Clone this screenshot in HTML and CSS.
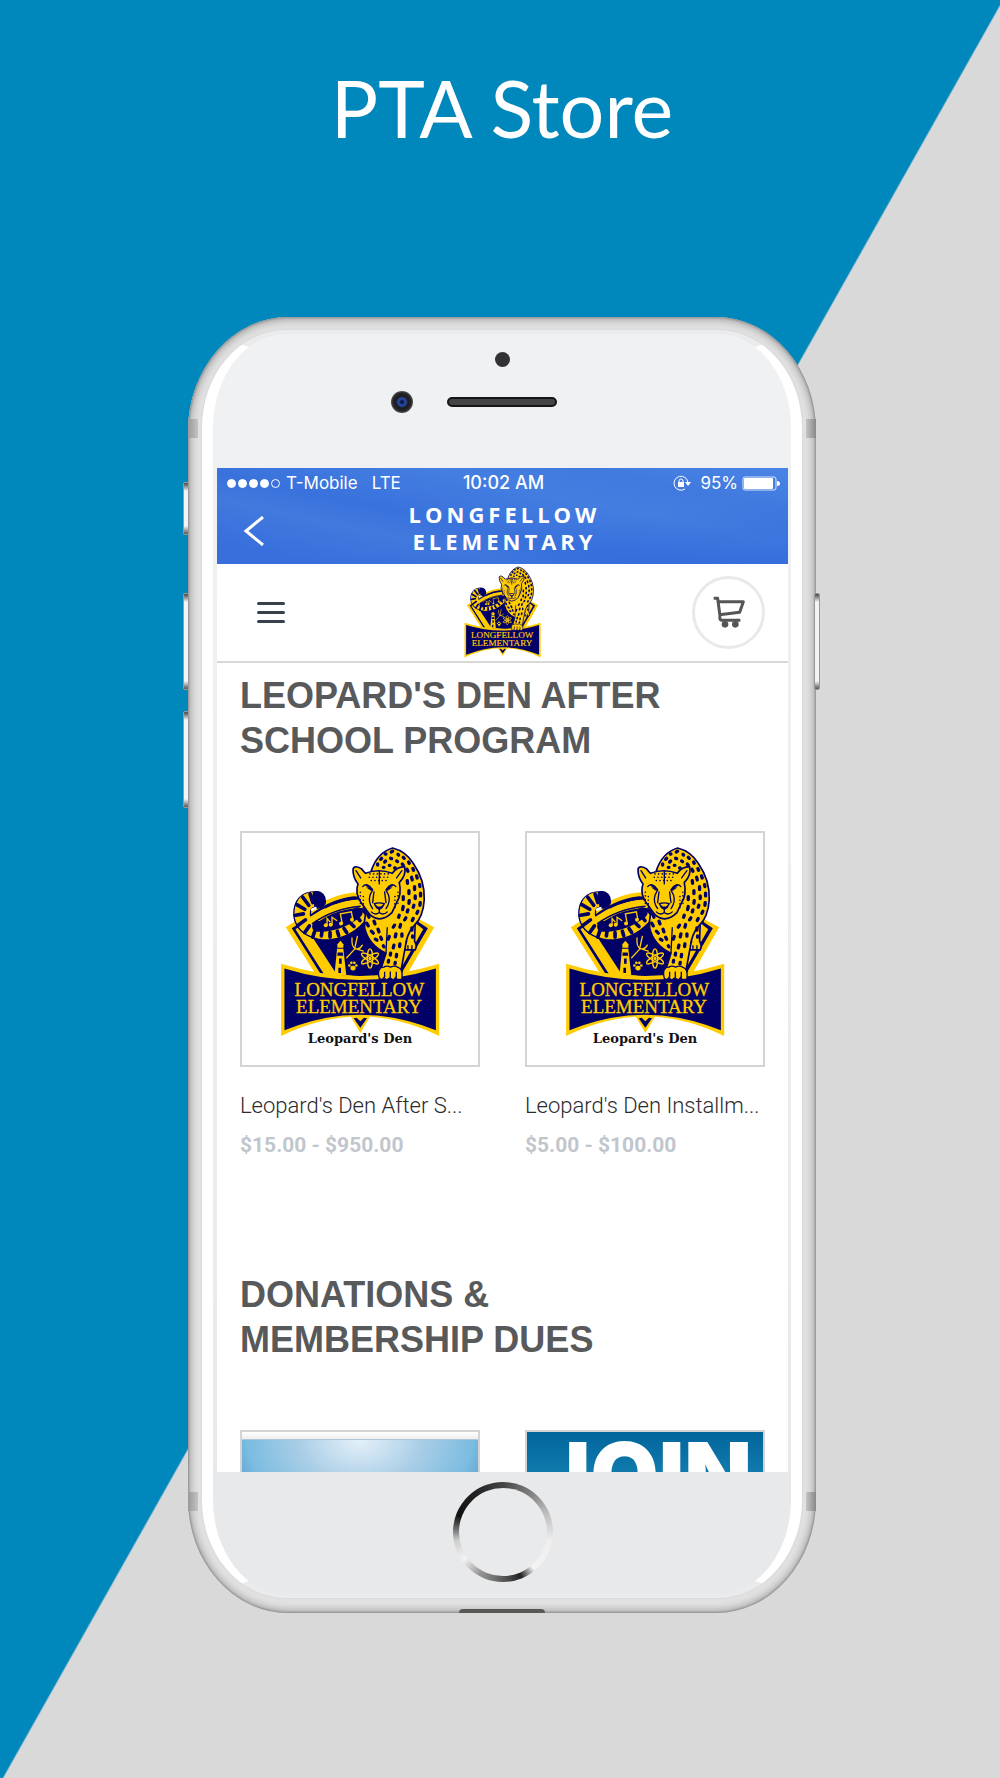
FILE: index.html
```html
<!DOCTYPE html>
<html lang="en">
<head>
    <meta charset="UTF-8">
    <meta name="viewport" content="width=device-width, initial-scale=1.0">
    <title>PTA Store</title>
    <link rel="stylesheet" href="styles.css">
</head>
<body>

<!-- school logo, used in the header and in the products -->
<svg class="sprite" aria-hidden="true">
    <symbol id="logo" viewBox="150 76 480 574">
        <!-- shield -->
        <path fill="#fc0" d="M167 320L205 296Q285 224 370 216Q480 220 575 300L613 320L515 490H275Z"/>
        <path fill="#006" d="M185 323L212 306Q290 235 372 227Q480 232 568 306L594 323L502 480H284Z"/>
        <path fill="#fc0" d="M196 326L218 312Q295 246 375 238Q480 244 562 312L580 326L492 480H294Z"/>
        <path fill="#006" d="M234 330Q300 264 392 262Q490 266 546 326L470 464Q400 474 350 464L332 480Z"/>
        <path stroke="#006" stroke-width="6" d="M268 370L312 436M546 325L524 365"/>

        <!-- lighthouse -->
        <path fill="#fc0" d="M321 385H340L349 466H313Z"/>
        <path fill="#fc0" d="M322 382V371L331 361L340 371V382Z"/>
        <path fill="#006" d="M323 396H338L340 406H322ZM327 414H335V430H327ZM325 442H333V458H325Z"/>
        <!-- music notes, trident, atom and paw -->
        <g fill="none" stroke="#fc0" stroke-width="4" stroke-linecap="round">
            <path d="M350 412L374 386M366 352Q364 380 376 384Q388 390 397 374M382 348L374 384M374 384L400 392"/>
            <ellipse cx="420" cy="414" rx="8" ry="29"/>
            <ellipse cx="420" cy="414" rx="8" ry="29" transform="rotate(60 420 414)"/>
            <ellipse cx="420" cy="414" rx="8" ry="29" transform="rotate(120 420 414)"/>
        </g>
        <g fill="#fc0">
            <circle cx="420" cy="414" r="5"/>
            <ellipse cx="369" cy="443" rx="8" ry="7"/>
            <circle cx="358" cy="435" r="4"/>
            <circle cx="364" cy="427" r="4"/>
            <circle cx="373" cy="427" r="4"/>
            <circle cx="379" cy="435" r="4"/>
        </g>

        <!-- tail -->
        <g fill="none" stroke-linecap="round">
            <path stroke="#006" stroke-width="54" d="M260 238Q214 236 216 284Q222 326 290 336"/>
            <path stroke="#fc0" stroke-width="46" stroke-linecap="butt" d="M250 236Q215 240 216 284Q222 326 290 336"/>
            <path stroke="#006" stroke-width="46" d="M286 338Q344 338 388 290"/>
            <path stroke="#fc0" stroke-width="39" d="M280 337Q344 337 386 291"/>
            <path stroke="#006" stroke-width="32" d="M262 318Q330 318 382 276"/>
            <path stroke="#006" stroke-width="11" d="M240 220L248 246M218 230L236 254M200 252L224 266M196 284L220 280M204 314L226 298M224 336L238 316M248 350L254 332M274 346L276 330M300 350L300 336M326 346L322 332M350 336L342 324M372 318L362 308M390 300L382 290"/>
            <path stroke="#006" stroke-width="32" d="M262 228L272 244"/>
            <path stroke="#fff" stroke-width="8" d="M246 267L256 263"/>
            <path stroke="#fc0" stroke-width="20" stroke-linecap="butt" d="M244 298Q310 252 384 246"/>
            <path stroke="#006" stroke-width="5" stroke-linecap="butt" d="M246 310Q310 264 392 257M284 262Q330 236 382 234"/>
            <path stroke="#fc0" stroke-width="4" d="M291 314V294L300 304M306 312V290L320 300M336 306L331 280L364 274L368 294"/>
        </g>
        <g fill="#fc0">
            <circle cx="287" cy="314" r="6"/>
            <circle cx="302" cy="313" r="6"/>
            <circle cx="333" cy="309" r="6"/>
            <circle cx="366" cy="298" r="6"/>
        </g>

        <!-- hind leg and body -->
        <path fill="#fc0" stroke="#006" stroke-width="5" d="M518 320L530 364Q520 376 526 388L556 388Q562 376 554 362L556 300Z"/>
        <path fill="#fc0" stroke="#006" stroke-width="5" d="M424 150Q442 96 488 82Q528 92 550 128Q586 180 583 238Q580 290 552 316Q530 340 526 380L514 446Q524 470 512 477H452Q440 462 454 442L468 398Q416 374 404 322Q400 280 420 260L500 200Z"/>
        <path fill="none" stroke="#006" stroke-width="10" stroke-linecap="round" d="M443 130v3M452 116l3-3M466 100h2M484 94l4-2M504 101l2 2M520 110l3 3M536 124l2 4M549 144l2 5M560 166l2 6M569 192l1 6M572 218v8M571 246l-1 8M564 272l-3 6M550 294l-3 6M464 124l3-3M482 113l3 1M500 121l3 2M517 130l3 4M531 146l3 6M545 170l2 8M554 198v9M556 226v8M552 254l-2 6M460 140h2M478 134h2M494 142h2M532 180l1 8M537 210v9M538 240l-1 8M534 268l-2 6M520 228v9M520 258l-2 9M528 292l-4 6M508 284l-2 6M512 312l-2 8M494 314l-4 6M498 340l-2 9M516 340v7M478 348l-3 8M492 374l-2 8M510 370l-1 8M482 398l-1 6M500 402l-1 7M414 282l3 8M410 308l5 8M432 302l3 8M424 332l6 6M444 326l3 8M452 350l3 6M436 356l5 3M460 376l2 3M476 420l-1 5M496 426l-1 4M546 322v7M548 346v4"/>
        <path fill="none" stroke="#006" stroke-width="4" d="M472 320L468 398M534 388V374M546 388V374"/>

        <!-- head -->
        <path fill="#fc0" stroke="#006" stroke-width="5" stroke-linejoin="round" d="M369 146Q372 132 394 144L406 158Q447 143 487 158Q502 138 524 138Q530 164 508 186Q516 222 500 246L486 276Q468 294 448 295Q424 292 412 272L392 244Q374 216 384 190Q368 170 369 146Z"/>
        <path fill="none" stroke="#006" stroke-width="4" stroke-linecap="round" d="M378 150L392 172M516 150L500 172M448 150V190M408 194L427 207M488 194L469 207M398 198Q412 182 428 208L420 224Q414 246 428 264M498 198Q484 182 468 208L476 224Q482 246 468 264M432 214L428 246M464 214L468 246M448 266V276M448 276Q436 286 424 274M448 276Q460 286 472 274"/>
        <path fill="#006" d="M430 248Q448 242 466 248L458 262L448 269L438 262ZM408 200L428 204L424 211ZM488 200L468 204L472 211Z"/>
        <path fill="#fc0" d="M436 251Q448 247 460 251L453 258H443Z"/>
        <path fill="none" stroke="#006" stroke-width="5" stroke-linecap="round" stroke-dasharray="0 11" d="M420 160H480M418 170H480M424 180H474M391 215V250M400 228V262M504 215V250M495 228V262"/>

        <!-- banner -->
        <path fill="#fc0" d="M357 580H425L391 638Z"/>
        <path fill="#006" d="M371 594L380 592L391 603L402 592L411 594L391 622Z"/>
        <path fill="#fc0" d="M153 430Q390 504 628 430V647Q390 530 153 647Z"/>
        <path fill="#006" d="M163 444Q390 514 618 444V630Q390 536 163 630Z"/>
        <path fill="#fc0" stroke="#006" stroke-width="4" d="M448 474Q440 440 462 440Q470 434 482 440Q496 434 504 441Q520 444 516 476L502 478L498 470L490 479L480 472L470 479L462 471L456 478Z"/>
        <path stroke="#006" stroke-width="4" d="M464 470V454M481 471V453M499 470V454"/>
        <text class="logo-text" x="388" y="527">LONGFELLOW</text>
        <text class="logo-text" x="387" y="577">ELEMENTARY</text>
    </symbol>
</svg>

<main class="page">
    <h1>PTA Store</h1>

    <div class="phone">
        <span class="side-btn mute"></span>
        <span class="side-btn vol-up"></span>
        <span class="side-btn vol-down"></span>
        <span class="side-btn power"></span>
        <span class="band band-top"></span>
        <span class="band band-bottom"></span>
        <span class="port"></span>

        <div class="glass">
            <div class="sensors">
                <span class="sensor"></span>
                <div class="ear">
                    <span class="camera"></span>
                    <span class="speaker"></span>
                </div>
            </div>

            <div class="screen">
                <div class="app-bar">
                    <div class="status">
                        <div class="carrier">
                            <span class="signal"><i></i><i></i><i></i><i></i><i class="off"></i></span>
                            <span>T-Mobile</span>
                            <span class="lte">LTE</span>
                        </div>
                        <span class="time">10:02 AM</span>
                        <div class="power-info">
                            <svg class="lock" viewBox="0 0 18 16" aria-hidden="true">
                                <path fill="none" stroke="#fff" stroke-width="1" d="M15 8A7 7 0 1 0 12 14"/>
                                <path fill="#fff" d="M12 7H18L15 11ZM5 7H11V12H5Z"/>
                                <path fill="none" stroke="#fff" d="M6 7V6A2 2 0 0 1 10 6V7"/>
                            </svg>
                            <span>95%</span>
                            <svg class="battery" viewBox="0 0 38 15" aria-hidden="true">
                                <rect x="1" y="1" width="33" height="13" rx="2" fill="none" stroke="#fff" stroke-opacity=".8"/>
                                <rect x="2" y="2" width="29" height="11" rx="1" fill="#fff"/>
                                <path fill="#fff" d="M35 5Q38 5 38 7.500Q38 10 35 10Z"/>
                            </svg>
                        </div>
                    </div>
                    <div class="title-bar">
                        <button type="button" class="back" aria-label="Back">
                            <svg viewBox="0 0 20 30" aria-hidden="true"><path d="M19 1L2 15L19 29"/></svg>
                        </button>
                        <h2>LONGFELLOW ELEMENTARY</h2>
                    </div>
                </div>

                <header class="store-header">
                    <button type="button" class="menu" aria-label="Menu"><span></span><span></span><span></span></button>
                    <svg class="header-logo" role="img" aria-label="Longfellow Elementary"><use href="#logo"/></svg>
                    <button type="button" class="cart" aria-label="Cart">
                        <svg viewBox="144 394 96 96" aria-hidden="true">
                            <path d="M146 401H158L165 454Q162 467 172 467H226M160 411H235L224 443L164 450"/>
                            <circle cx="180" cy="479" r="10"/>
                            <circle cx="211" cy="479" r="10"/>
                        </svg>
                    </button>
                </header>

                <section>
                    <h3>LEOPARD'S DEN AFTER SCHOOL PROGRAM</h3>
                    <div class="products">
                        <a class="product" href="#">
                            <div class="picture">
                                <svg class="product-logo" aria-hidden="true"><use href="#logo"/></svg>
                                <span class="den">Leopard's Den</span>
                            </div>
                            <div class="name">Leopard's Den After S...</div>
                            <div class="price">$15.00 - $950.00</div>
                        </a>
                        <a class="product" href="#">
                            <div class="picture">
                                <svg class="product-logo" aria-hidden="true"><use href="#logo"/></svg>
                                <span class="den">Leopard's Den</span>
                            </div>
                            <div class="name">Leopard's Den Installm...</div>
                            <div class="price">$5.00 - $100.00</div>
                        </a>
                    </div>
                </section>

                <section>
                    <h3>DONATIONS &amp; MEMBERSHIP DUES</h3>
                    <div class="products">
                        <a class="product" href="#" aria-label="Donation"><div class="picture sky"></div></a>
                        <a class="product" href="#"><div class="picture join">JOIN</div></a>
                    </div>
                </section>
            </div>

            <div class="chin">
                <button type="button" class="home" aria-label="Home"></button>
            </div>
        </div>
    </div>
</main>

</body>
</html>
```
FILE: styles.css
```css
* {
    box-sizing: border-box;
}
body {
    margin: 0;
    font-family: "Liberation Sans", Arial, sans-serif;
}
button {
    padding: 0;
    background: none;
    border: none;
    cursor: pointer;
}
.sprite {
    display: none;
}
.page {
    min-height: 100vh;
    padding: 56px 0 164px 4px;
    background: linear-gradient(to bottom right, #0087bb 50.1%, #d9d9d9 50.2%);
}
h1 {
    margin: 0 0 157px;
    font-family: Lato, sans-serif;
    font-size: 79px;
    line-height: 104px;
    font-weight: 400;
    text-align: center;
    color: white;
}

/* phone */
.phone {
    position: relative;
    width: 90%;
    max-width: 628px;
    margin: 0 auto;
    padding: 13px 14px 15px;
    border-radius: 100px / 114px;
    background: #e3e3e3;
    box-shadow: inset 0 0 2px 1px #8f8f8f, inset 0 0 9px 3px #a8a8a8;
}
.glass {
    border: 4px solid #eaebed;
    border-width: 4px 11px;
    border-left-color: white;
    border-right-color: white;
    border-radius: 84px / 98px;
    padding: 0 3px 0 4px;
    background: linear-gradient(#f0f1f3, #eff0f2 20%, #e8e9eb 90%);
    box-shadow: 0 0 2px 1px #d8d8d8;
}
.sensors {
    height: 134px;
    padding-top: 18px;
}
.sensor {
    display: block;
    width: 15px;
    height: 15px;
    margin: 0 auto 24px;
    border-radius: 50%;
    background: #323234;
}
.ear {
    display: flex;
    justify-content: center;
    align-items: center;
    gap: 34px;
    padding-right: 57px;
}
.camera {
    width: 22px;
    height: 22px;
    border-radius: 50%;
    background: radial-gradient(circle at 50% 50%, #0a1440 1px, #27479f 3px, #27479f 4px, #1c1c1e 6px, #262628 9px, #555 11px);
}
.speaker {
    width: 110px;
    height: 10px;
    border: 2px solid #161616;
    border-radius: 5px;
    background: #444;
}
.side-btn {
    position: absolute;
    left: -5px;
    width: 6px;
    border: 1px solid #999;
    border-radius: 2px;
    background: linear-gradient(#444, #f4f4f4 8px, #f4f4f4 calc(100% - 8px), #555);
}
.mute {
    top: 165px;
    height: 53px;
}
.vol-up {
    top: 276px;
    height: 97px;
}
.vol-down {
    top: 394px;
    height: 97px;
}
.power {
    top: 276px;
    left: auto;
    right: -4px;
    height: 97px;
}
.band {
    position: absolute;
    left: 0;
    right: 0;
    height: 19px;
    background: linear-gradient(90deg, #999, #c4c4c4 10px, transparent 10px, transparent calc(100% - 10px), #c4c4c4 calc(100% - 10px), #888);
}
.band-top {
    top: 102px;
}
.band-bottom {
    bottom: 102px;
}
.port {
    position: absolute;
    bottom: 0;
    left: 50%;
    width: 86px;
    height: 4px;
    margin-left: -43px;
    border-radius: 4px 4px 0 0;
    background: #5a5855;
}
.chin {
    display: flex;
    justify-content: center;
    padding: 10px 0 12px;
}
.home {
    width: 100px;
    height: 100px;
    border: 6px solid transparent;
    border-radius: 50%;
    background: linear-gradient(#e9eaec, #e9eaec) padding-box,
        conic-gradient(#444, #888 40deg, #bbb 65deg, #eee 100deg, #f4f4f4 140deg, #222 158deg, #666 185deg, #999 210deg, #f4f4f4 235deg, #ccc 260deg, #666 275deg, #111 290deg, #222 325deg, #444) border-box;
}

/* screen */
.screen {
    aspect-ratio: 571 / 1004;
    overflow: hidden;
    background: white;
}
.app-bar {
    color: white;
    background: linear-gradient(172deg, transparent 60%, #2c66d988), linear-gradient(12deg, #386fdc 10%, #4179de 30%, #3a72dd 42%, #447ee0 65%, #417adf 80%, #4a84e4);
}
.status {
    display: grid;
    grid-template-columns: 1fr auto 1fr;
    align-items: center;
    padding: 0 8px 0 10px;
    font-family: Inter, sans-serif;
    font-size: 17px;
    line-height: 30px;
}
.carrier,
.power-info {
    display: flex;
    align-items: center;
}
.signal {
    display: flex;
    gap: 2px;
    margin-right: 6px;
}
.signal i {
    width: 9px;
    height: 9px;
    border: 1px solid white;
    border-radius: 50%;
    background: white;
}
.signal .off {
    background: none;
}
.lte {
    margin-left: 14px;
}
.time {
    font-size: 18px;
    font-weight: 500;
}
.power-info {
    justify-content: flex-end;
}
.lock {
    width: 18px;
    height: 16px;
    margin-right: 9px;
}
.battery {
    width: 38px;
    height: 15px;
    margin-left: 4px;
}
.title-bar {
    display: grid;
    grid-template-columns: 1fr 220px 1fr;
    align-items: center;
    padding: 3px 0 9px;
}
.back {
    display: flex;
    margin: 6px 0 0 25px;
}
.back svg {
    width: 24px;
    height: 30px;
    fill: none;
    stroke: white;
    stroke-width: 3;
}
h2 {
    margin: 0;
    padding-left: 4px;
    font-family: "Open Sans", sans-serif;
    font-size: 22px;
    line-height: 27px;
    font-weight: 700;
    letter-spacing: 4px;
    text-align: center;
}
.store-header {
    display: grid;
    grid-template-columns: 1fr auto 1fr;
    align-items: center;
    padding: 2px 23px 3px 40px;
    border-bottom: 2px solid #d8d8d8;
}
.menu {
    display: grid;
    gap: 6px;
    width: 28px;
}
.menu span {
    height: 3px;
    border-radius: 2px;
    background: #36414b;
}
.header-logo {
    width: 77px;
    height: 92px;
    margin-right: 17px;
}
.cart {
    display: flex;
    justify-content: center;
    align-items: center;
    justify-self: end;
    width: 73px;
    height: 73px;
    border: 3px solid #e9e9e9;
    border-radius: 50%;
}
.cart svg {
    width: 32px;
    height: 32px;
    fill: #555;
}
.cart path {
    fill: none;
    stroke: #555;
    stroke-width: 9;
    stroke-linejoin: round;
}
section {
    padding: 10px 23px 102px;
}
h3 {
    margin: 0 0 68px;
    font-size: 36px;
    line-height: 45px;
    font-weight: 700;
    text-wrap: balance;
    color: #58595b;
}
.products {
    display: grid;
    grid-template-columns: 1fr 1fr;
    gap: 45px;
}
.product {
    min-width: 0;
    color: #2b2b2b;
    text-decoration: none;
}
.picture {
    display: flex;
    flex-direction: column;
    align-items: center;
    height: 236px;
    padding-top: 13px;
    border: 2px solid #d4d4d4;
}
.product-logo {
    width: 160px;
    height: 191px;
    flex-shrink: 0;
}
.logo-text {
    font-family: "Liberation Serif", serif;
    font-size: 57px;
    fill: #fc0;
    stroke: #fc0;
    stroke-width: 1px;
    text-anchor: middle;
}
.den {
    margin-top: -8px;
    font-family: "DejaVu Serif", serif;
    font-size: 13px;
    line-height: 20px;
    font-weight: 700;
    color: #111;
}
.name {
    margin-top: 24px;
    font-family: Roboto, sans-serif;
    font-size: 22px;
    line-height: 30px;
    font-weight: 300;
    white-space: nowrap;
}
.price {
    margin-top: 9px;
    font-family: Roboto, sans-serif;
    font-size: 21px;
    line-height: 30px;
    font-weight: 700;
    color: #c1c6cc;
}
.sky {
    background: radial-gradient(ellipse 140px 100px at 50% 0, #e4f0f8, #a8cde6 45%, #7bbce0 80%, #5a9bd3) 0 8px no-repeat, linear-gradient(white, #eee 7px, #6f9fc8 8px);
}
.join {
    padding: 2px 0 0;
    font-family: Inter, sans-serif;
    font-size: 88px;
    line-height: 80px;
    font-weight: 900;
    color: white;
    background: linear-gradient(#00659b, #117aad 40px, #2a93c2);
}
```
